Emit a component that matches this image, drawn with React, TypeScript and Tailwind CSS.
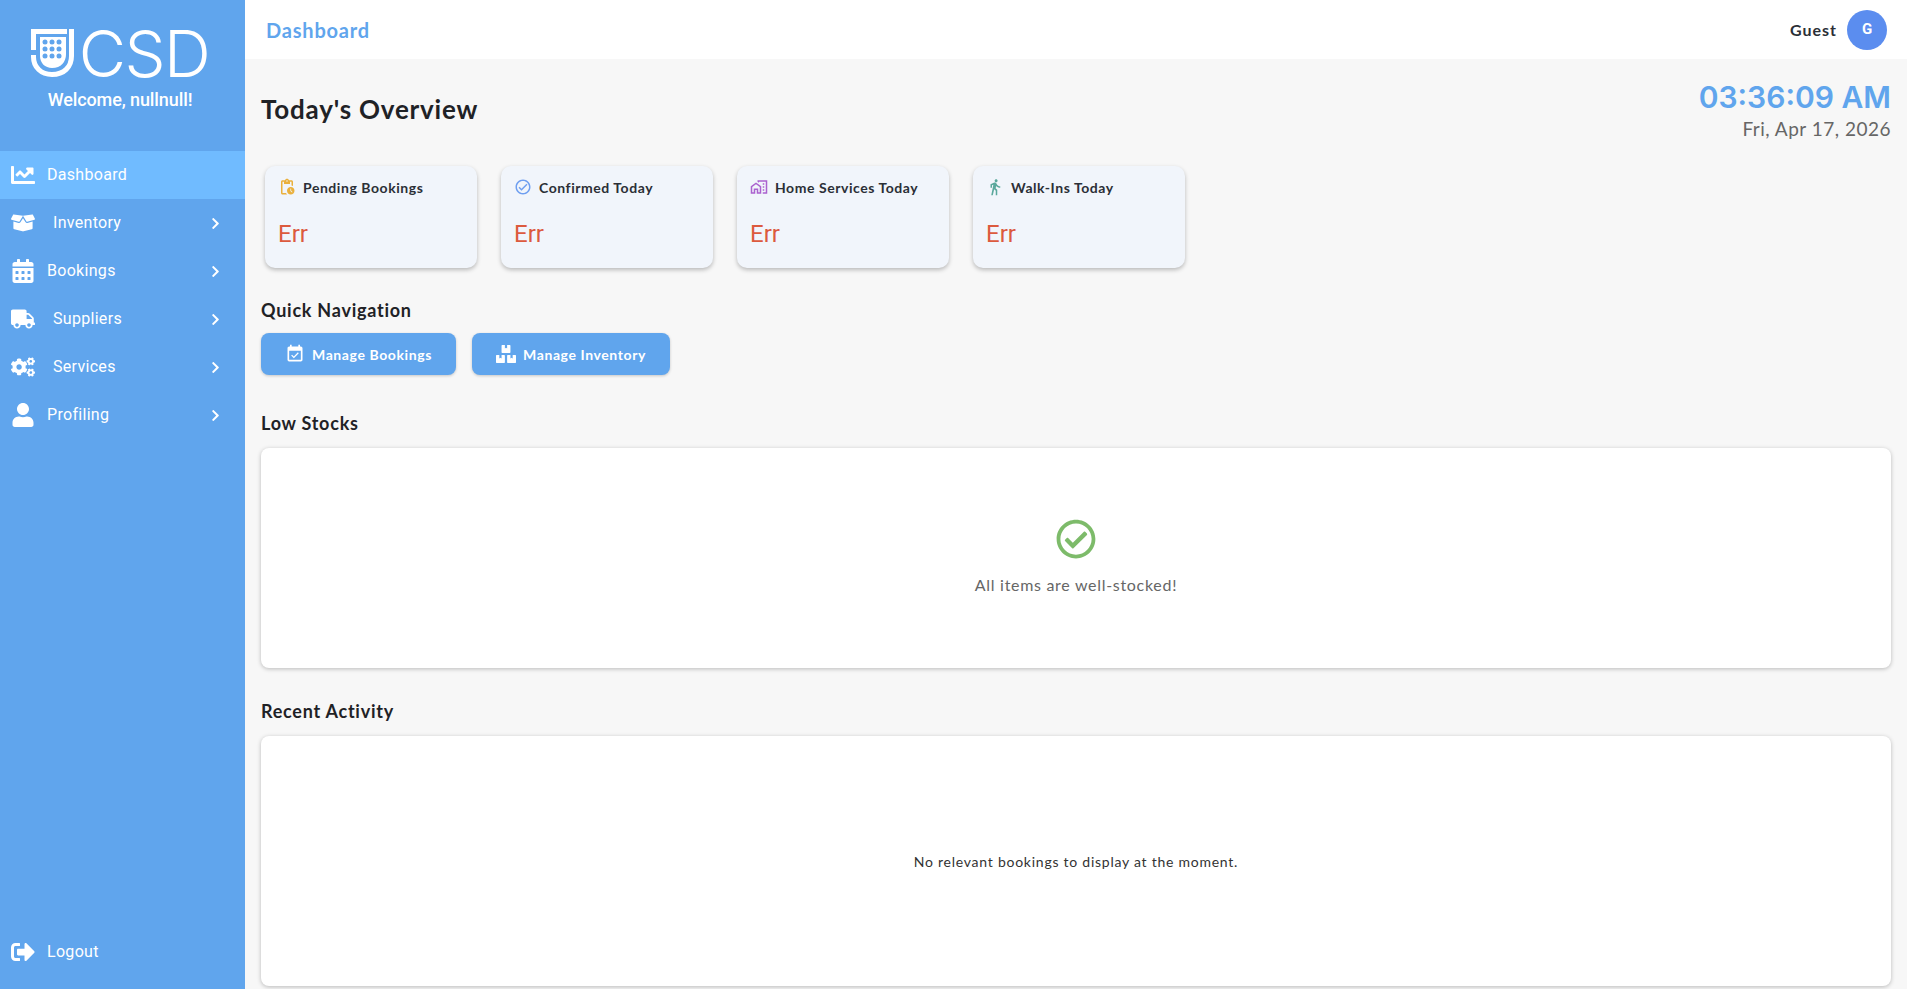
import type { ReactNode } from "react";
import {
  FaBoxes,
  FaBoxOpen,
  FaCalendarAlt,
  FaChartLine,
  FaChevronRight,
  FaCogs,
  FaRegCheckCircle,
  FaSignOutAlt,
  FaTruck,
  FaUser,
} from "react-icons/fa";
import {
  MdEventAvailable,
  MdOutlineCheckCircle,
  MdOutlineDirectionsWalk,
  MdOutlineHomeWork,
  MdOutlinePendingActions,
} from "react-icons/md";

const bodyFont = "font-['Lato','Noto_Sans',sans-serif]";

function Logo() {
  return (
    <div className="flex h-[48px] items-center text-white">
      <svg width="46" height="48" viewBox="0 0 46 48" className="shrink-0" fill="none">
        {/* shield shaped U */}
        <path d="M2.5 21V2.5H36" stroke="white" strokeWidth="5" />
        <path
          d="M2.5 26V28C2.5 38 10 45.5 21 45.5C33 45.5 40.5 38 40.5 27V0"
          stroke="white"
          strokeWidth="5"
        />
        <path d="M9 8H35V25C35 33 30 39 21 39C14 39 9 34 9 27Z" fill="white" />
        <g fill="#60a5ed">
          <circle cx="14" cy="13" r="2.5" />
          <circle cx="21" cy="13" r="2.5" />
          <circle cx="28" cy="13" r="2.5" />
          <circle cx="14" cy="20" r="2.5" />
          <circle cx="28" cy="20" r="2.5" />
          <circle cx="14" cy="27" r="2.5" />
          <circle cx="21" cy="27" r="2.5" />
          <circle cx="28" cy="27" r="2.5" />
          <circle cx="21" cy="20" r="2.5" />
        </g>
      </svg>
      <span className="ml-[2px] font-['Inter',sans-serif] text-[65px] leading-none font-light tracking-[-1.5px]">
        CSD
      </span>
    </div>
  );
}

function NavItem({
  icon,
  label,
  wide,
  active,
  chevron = true,
}: {
  icon: ReactNode;
  label: string;
  wide?: boolean;
  active?: boolean;
  chevron?: boolean;
}) {
  return (
    <div
      className={`flex h-[48px] items-center pr-[23px] pl-[11px] text-white ${active ? "bg-[#70bbff]" : ""}`}
    >
      <span className={`flex shrink-0 items-center text-[24px] ${wide ? "w-[30px]" : "w-[24px]"} mr-3`}>
        {icon}
      </span>
      <span className="flex-1 text-[16px] tracking-[0.3px]">{label}</span>
      {chevron && <FaChevronRight className="text-[13px]" />}
    </div>
  );
}

function StatCard({ icon, title }: { icon: ReactNode; title: string }) {
  return (
    <div className="flex h-[102px] w-[212px] flex-col rounded-[10px] bg-[#f1f5fb] px-[13px] pt-[13px] shadow-[0_2px_4px_rgba(0,0,0,0.25)]">
      <div className="flex h-[16px] items-center">
        <span className="flex w-[24px] shrink-0 items-center text-[18px]">{icon}</span>
        <span className={`${bodyFont} ml-[1px] text-[14px] font-bold tracking-[0.55px] text-[#2b2f36]`}>
          {title}
        </span>
      </div>
      <div className="mt-[25px] font-['Roboto',sans-serif] text-[24px] leading-[28px] text-[#dc5a3e]">Err</div>
    </div>
  );
}

function QuickButton({ icon, label, width }: { icon: ReactNode; label: string; width: string }) {
  return (
    <button
      className={`${width} ${bodyFont} flex h-[42px] items-center justify-center gap-[7px] rounded-[8px] bg-[#60a5ed] text-[14px] font-bold tracking-[0.6px] text-white shadow-[0_1px_3px_rgba(0,0,0,0.2)]`}
    >
      {icon}
      {label}
    </button>
  );
}

function SectionTitle({ children }: { children: ReactNode }) {
  return <h2 className={`${bodyFont} text-[18px] leading-[24px] font-bold tracking-[0.75px] text-[#1f2226]`}>{children}</h2>;
}

export default function App() {
  return (
    <div className="flex h-screen w-full overflow-hidden bg-[#f7f7f7]">
      {/* Sidebar */}
      <aside className="flex h-full w-[245px] shrink-0 flex-col bg-[#60a5ed] font-['Roboto',sans-serif]">
        <div className="flex flex-col items-center pt-[29px] pr-[5px]">
          <Logo />
          <div className="mt-[12px] text-[18px] leading-[22px] font-medium tracking-[-0.1px] text-white">
            Welcome, nullnull!
          </div>
        </div>

        <nav className="mt-[40px] flex flex-1 flex-col">
          <NavItem icon={<FaChartLine />} label="Dashboard" active chevron={false} />
          <NavItem icon={<FaBoxOpen />} label="Inventory" wide />
          <NavItem icon={<FaCalendarAlt />} label="Bookings" />
          <NavItem icon={<FaTruck />} label="Suppliers" wide />
          <NavItem icon={<FaCogs />} label="Services" wide />
          <NavItem icon={<FaUser />} label="Profiling" />
        </nav>

        <div className="mb-[13px]">
          <NavItem icon={<FaSignOutAlt />} label="Logout" chevron={false} />
        </div>
      </aside>

      {/* Main */}
      <div className="flex h-full min-w-0 flex-1 flex-col">
        <header className="flex h-[59px] shrink-0 items-center justify-between bg-white pr-[20px] pl-[21px]">
          <div className={`${bodyFont} text-[20px] font-bold tracking-[0.8px] text-[#60a5ed]`}>Dashboard</div>
          <div className="flex items-center gap-[10px]">
            <span className={`${bodyFont} text-[16px] font-bold tracking-[1px] text-[#2b2f36]`}>Guest</span>
            <div className="flex h-[40px] w-[40px] items-center justify-center rounded-full bg-[#5b8def] font-['Roboto',sans-serif] text-[15px] font-bold text-white">
              G
            </div>
          </div>
        </header>

        <main className="flex min-h-0 flex-1 flex-col overflow-hidden px-4">
          <div className="flex items-start justify-between pt-[20px]">
            <h1 className={`${bodyFont} mt-[14px] text-[26px] leading-[32px] font-bold tracking-[0.8px] text-[#1f2226]`}>
              Today's Overview
            </h1>
            <div className="text-right">
              <div className="font-['Inter',sans-serif] text-[30px] leading-[36px] font-semibold text-[#60a5ed]">
                03:36:09 AM
              </div>
              <div className={`${bodyFont} mt-[2px] text-[19px] leading-[24px] tracking-[0.5px] text-[#666666]`}>
                Fri, Apr 17, 2026
              </div>
            </div>
          </div>

          <div className="mt-[25px] flex gap-[24px] pl-[4px]">
            <StatCard icon={<MdOutlinePendingActions className="text-[#eab03c]" />} title="Pending Bookings" />
            <StatCard icon={<MdOutlineCheckCircle className="text-[#6f9ff0]" />} title="Confirmed Today" />
            <StatCard icon={<MdOutlineHomeWork className="text-[#ab62cf]" />} title="Home Services Today" />
            <StatCard icon={<MdOutlineDirectionsWalk className="text-[#5aa89c]" />} title="Walk-Ins Today" />
          </div>

          <div className="mt-[30px]">
            <SectionTitle>Quick Navigation</SectionTitle>
          </div>
          <div className="mt-[11px] flex gap-[16px]">
            <QuickButton icon={<MdEventAvailable className="text-[20px]" />} label="Manage Bookings" width="w-[195px]" />
            <QuickButton icon={<FaBoxes className="text-[20px]" />} label="Manage Inventory" width="w-[198px]" />
          </div>

          <div className="mt-[36px]">
            <SectionTitle>Low Stocks</SectionTitle>
          </div>
          <div className="mt-[13px] flex h-[220px] shrink-0 flex-col items-center justify-center rounded-[8px] bg-white shadow-[0_1px_4px_rgba(0,0,0,0.25)]">
            <FaRegCheckCircle className="text-[40px] text-[#7dbb6a]" />
            <p className={`${bodyFont} mt-[14px] text-[16px] tracking-[0.7px] text-[#666666]`}>All items are well-stocked!</p>
          </div>

          <div className="mt-[31px]">
            <SectionTitle>Recent Activity</SectionTitle>
          </div>
          <div className="mt-[13px] flex h-[250px] shrink-0 items-center justify-center rounded-[8px] bg-white shadow-[0_1px_4px_rgba(0,0,0,0.25)]">
            <p className={`${bodyFont} text-[14px] tracking-[0.75px] text-[#333333]`}>
              No relevant bookings to display at the moment.
            </p>
          </div>
        </main>
      </div>
    </div>
  );
}
